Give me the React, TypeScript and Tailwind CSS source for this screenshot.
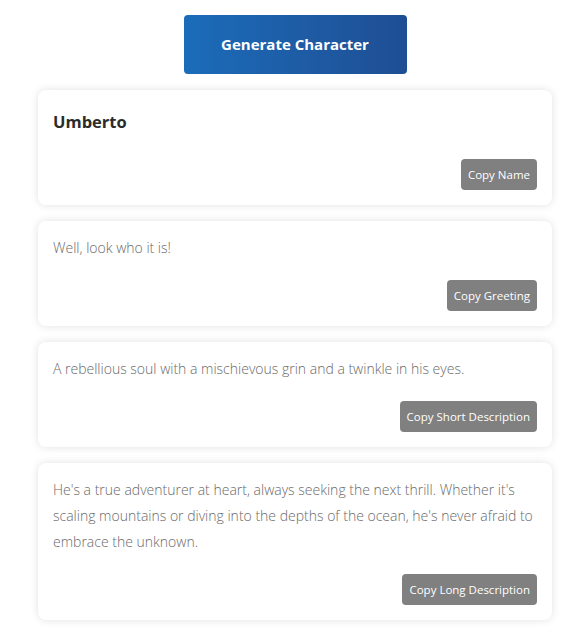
import React from "react";

function Card({ children, label, title }: { children: React.ReactNode; label: string; title?: boolean }) {
  return (
    <div className="bg-white rounded-[8px] shadow-[0_0_8px_rgba(0,0,0,0.12)] px-[15px] pt-[14px] pb-[15px]">
      {title ? (
        <div className="text-[16.5px] font-bold leading-[36px] text-[#2b2b2b]">{children}</div>
      ) : (
        <div className="text-[14px] font-[350] leading-[26px] text-[#6a6a6a]">{children}</div>
      )}
      <div className="flex justify-end mt-[19px]">
        <button className="h-[31px] px-[7px] rounded-[4px] bg-[#808080] text-white text-[11.5px]">{label}</button>
      </div>
    </div>
  );
}

export default function App() {
  return (
    <div className="min-h-[628px] bg-white pt-[15px]" style={{ fontFamily: '"Open Sans", sans-serif' }}>
      <div className="w-[514px] ml-[38px] flex flex-col">
        <div className="flex justify-center">
          <button className="w-[223px] h-[59px] rounded-[4px] bg-gradient-to-r from-[#1b6cba] to-[#1e4e93] text-white text-[15px] font-bold">
            Generate Character
          </button>
        </div>
        <div className="flex flex-col gap-[16px] mt-[16px]">
          <Card title label="Copy Name">Umberto</Card>
          <Card label="Copy Greeting">Well, look who it is!</Card>
          <Card label="Copy Short Description">A rebellious soul with a mischievous grin and a twinkle in his eyes.</Card>
          <Card label="Copy Long Description">
            He's a true adventurer at heart, always seeking the next thrill. Whether it's scaling mountains or diving into the depths of the ocean, he's never afraid to embrace the unknown.
          </Card>
        </div>
      </div>
    </div>
  );
}
